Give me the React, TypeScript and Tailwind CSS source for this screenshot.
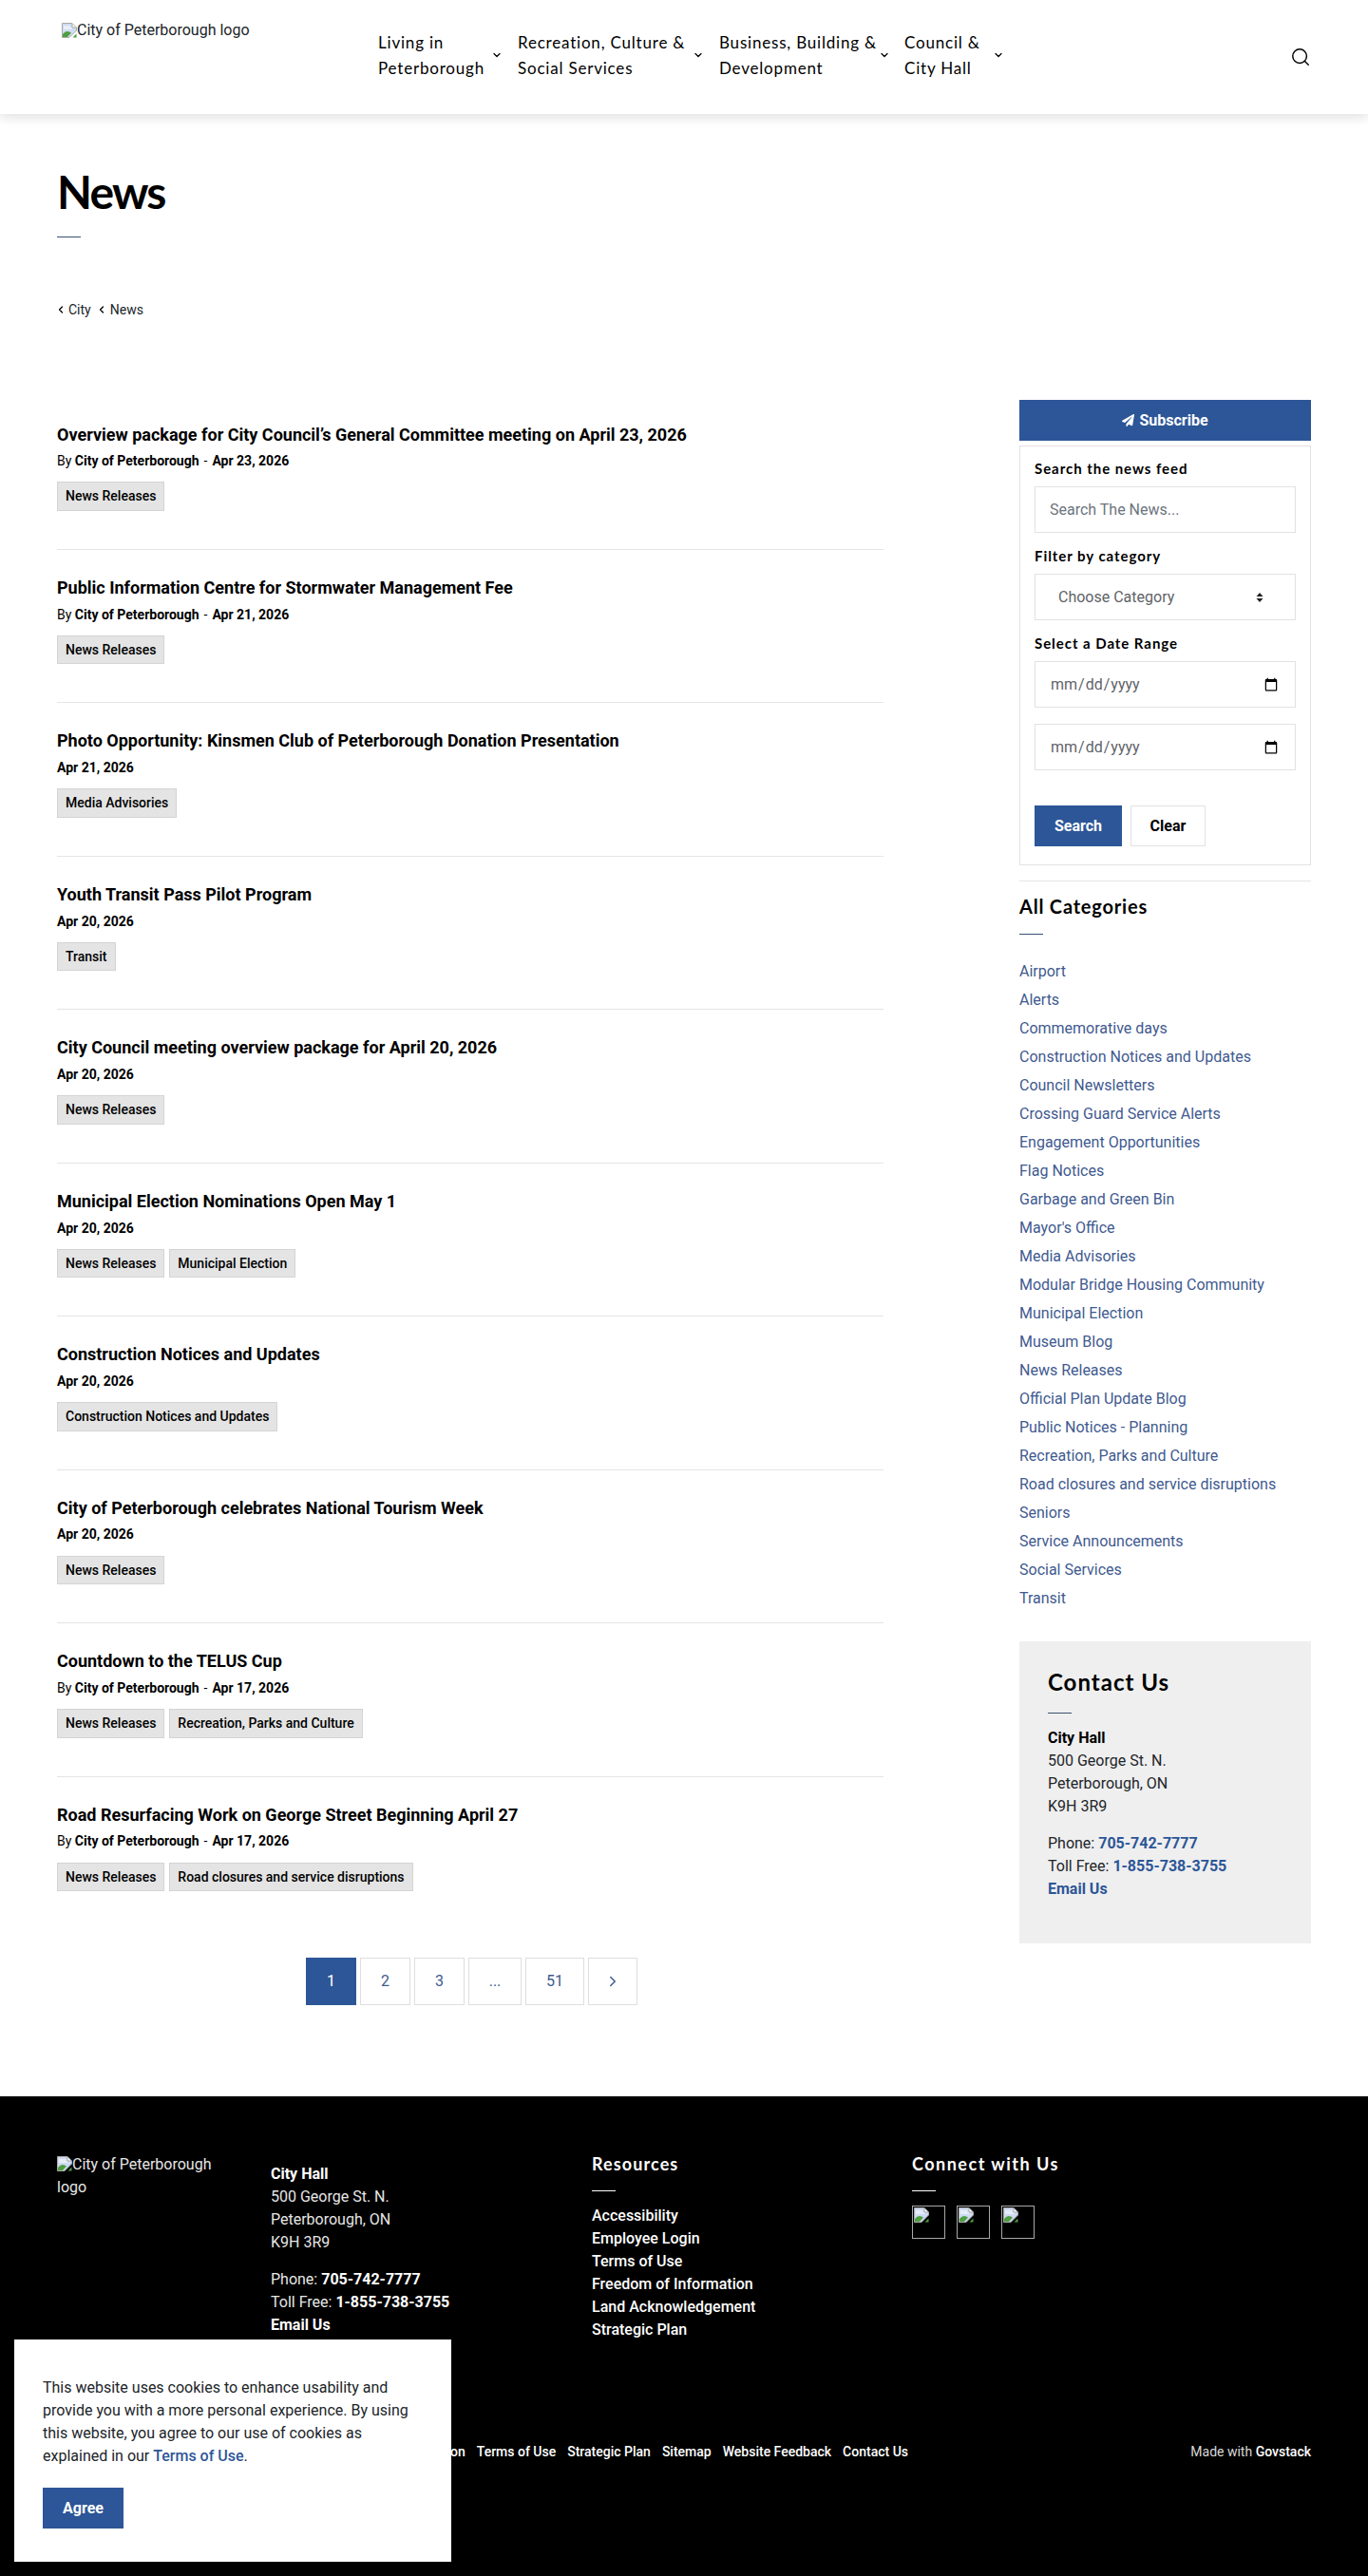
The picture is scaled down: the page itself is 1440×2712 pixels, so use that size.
import React from "react";
import { ChevronDown, ChevronLeft, ChevronRight, Search } from "lucide-react";
import { FaPaperPlane } from "react-icons/fa";

function BrokenImage() {
  return (
    <svg width="16" height="16" viewBox="0 0 16 16" className="inline-block shrink-0 align-[-2px]">
      <path d="M0.500 0.500H11L15.500 5V8L8 15.500H0.500z" fill="#cfdcf3" stroke="#a9a9a9" strokeWidth="1" />
      <path d="M2 4h7M2 6h9" stroke="#ffffff" strokeWidth="1" />
      <path d="M1 15V12Q4 8 8 9.500L10 10.500L6 15z" fill="#4f9e3f" />
      <path d="M11 1V5H15" fill="#ffffff" stroke="#a9a9a9" />
      <path d="M11.500 15.500H15.500V11.500z" fill="#4f9e3f" />
    </svg>
  );
}

const news = [
  { t: "Overview package for City Council’s General Committee meeting on April 23, 2026", by: true, d: "Apr 23, 2026", tags: ["News Releases"] },
  { t: "Public Information Centre for Stormwater Management Fee", by: true, d: "Apr 21, 2026", tags: ["News Releases"] },
  { t: "Photo Opportunity: Kinsmen Club of Peterborough Donation Presentation", by: false, d: "Apr 21, 2026", tags: ["Media Advisories"] },
  { t: "Youth Transit Pass Pilot Program", by: false, d: "Apr 20, 2026", tags: ["Transit"] },
  { t: "City Council meeting overview package for April 20, 2026", by: false, d: "Apr 20, 2026", tags: ["News Releases"] },
  { t: "Municipal Election Nominations Open May 1", by: false, d: "Apr 20, 2026", tags: ["News Releases", "Municipal Election"] },
  { t: "Construction Notices and Updates", by: false, d: "Apr 20, 2026", tags: ["Construction Notices and Updates"] },
  { t: "City of Peterborough celebrates National Tourism Week", by: false, d: "Apr 20, 2026", tags: ["News Releases"] },
  { t: "Countdown to the TELUS Cup", by: true, d: "Apr 17, 2026", tags: ["News Releases", "Recreation, Parks and Culture"] },
  { t: "Road Resurfacing Work on George Street Beginning April 27", by: true, d: "Apr 17, 2026", tags: ["News Releases", "Road closures and service disruptions"] },
];

const categories = [
  "Airport", "Alerts", "Commemorative days", "Construction Notices and Updates", "Council Newsletters",
  "Crossing Guard Service Alerts", "Engagement Opportunities", "Flag Notices", "Garbage and Green Bin",
  "Mayor's Office", "Media Advisories", "Modular Bridge Housing Community", "Municipal Election", "Museum Blog",
  "News Releases", "Official Plan Update Blog", "Public Notices - Planning", "Recreation, Parks and Culture",
  "Road closures and service disruptions", "Seniors", "Service Announcements", "Social Services", "Transit",
];

const nav = [
  { a: "Living in", b: "Peterborough", w: "w-[147px]", tw: "w-[119px]" },
  { a: "Recreation, Culture &", b: "Social Services", w: "w-[212px]", tw: "w-[184px]" },
  { a: "Business, Building &", b: "Development", w: "w-[195px]", tw: "w-[168px]" },
  { a: "Council &", b: "City Hall", w: "w-[110px]", tw: "w-[93px]" },
];

const pages = [
  { l: "1", w: "w-[53px]", active: true },
  { l: "2", w: "w-[53px]" },
  { l: "3", w: "w-[53px]" },
  { l: "...", w: "w-[56px]" },
  { l: "51", w: "w-[62px]" },
  { l: ">", w: "w-[52px]" },
];

const labelCls = "block h-6 mb-[7px] font-[Lato,sans-serif] font-bold text-[15px] leading-6 tracking-[0.95px] text-black";
const fieldCls = "block w-full h-[49px] border border-[#e2e2e2] bg-white px-[15px] text-[16px] text-[#5f6368] outline-none placeholder:text-[#6c757d]";

export default function App() {
  return (
    <div className="relative w-full bg-white font-[Roboto,sans-serif] text-[16px] text-black">
      <header className="relative z-10 flex h-[120px] items-start bg-white pl-[65px] pr-[60px] shadow-[0_5px_10px_rgba(0,0,0,0.1)]">
        <div className="mt-5 flex w-[333px] items-center gap-0 text-[16px] leading-6 text-[#212529]">
          <BrokenImage />
          <span>City of Peterborough logo</span>
        </div>
        <nav className="mt-[31px] flex">
          {nav.map((n) => (
            <div key={n.a} className={`flex items-center ${n.w}`}>
              <div className={`${n.tw} font-[Lato,sans-serif] text-[17px] leading-[27px] tracking-[0.8px] whitespace-nowrap text-black`}>
                {n.a}
                <br />
                {n.b}
              </div>
              <ChevronDown size={12} strokeWidth={2.5} className="text-black" />
            </div>
          ))}
        </nav>
        <div className="ml-auto mt-[49px]">
          <Search size={22} strokeWidth={1.6} className="text-black" />
        </div>
      </header>

      <section className="h-[300px] px-[60px] pt-[57px]">
        <h1 className="h-[50px] font-[Lato,sans-serif] text-[48px] leading-[50px] font-bold tracking-[-1.8px] text-black">News</h1>
        <div className="mt-[22px] h-px w-[25px] bg-[#3b5173]" />
        <div className="mt-[66px] flex items-center text-[14px] leading-5 text-[#212529]">
          <ChevronLeft size={12} strokeWidth={2.5} className="-ml-[2px] text-black" />
          <span className="ml-[2px]">City</span>
          <ChevronLeft size={12} strokeWidth={2.5} className="ml-[5px] text-black" />
          <span className="ml-[3px]">News</span>
        </div>
      </section>

      <main className="flex items-start justify-between px-[60px] pb-[96px]">
        <div className="w-[870px] pt-[26.500px]">
          {news.map((n, i) => (
            <article key={n.t} className={i < news.length - 1 ? "mb-[29px] border-b border-[#e5e5e5] pb-10" : ""}>
              <h2 className="text-[18px] leading-[21.6px] font-bold text-black">{n.t}</h2>
              <div className="mt-[7px] text-[14px] leading-[21px] font-bold text-black">
                {n.by && (
                  <>
                    <span className="font-normal">By </span>City of Peterborough<span className="mx-[5px] font-normal">-</span>
                  </>
                )}
                {n.d}
              </div>
              <div className="mt-[11.400px] flex gap-[5px]">
                {n.tags.map((t) => (
                  <span key={t} className="flex h-[30.500px] items-center border border-[#d4d4d4] bg-[#e4e4e4] px-2 text-[14px] font-medium text-black">
                    {t}
                  </span>
                ))}
              </div>
            </article>
          ))}
          <div className="mt-[70px] ml-[3px] flex h-[50px] justify-center gap-1">
            {pages.map((p) => (
              <span
                key={p.l}
                className={
                  p.active
                    ? `flex items-center justify-center ${p.w} bg-[#2c5697] text-[16px] text-white`
                    : `flex items-center justify-center ${p.w} border border-[#dedede] bg-white text-[16px] text-[#3f5a8f]`
                }
              >
                {p.l === ">" ? <ChevronRight size={18} strokeWidth={2} /> : p.l}
              </span>
            ))}
          </div>
        </div>

        <aside className="w-[307px] pt-[1px]">
          <button className="flex h-[43px] w-full items-center justify-center gap-[5px] bg-[#2c5697] text-[16px] font-bold text-white">
            <FaPaperPlane size={13} />
            Subscribe
          </button>
          <div className="mt-[5px] h-[442px] border border-[#e2e2e2] px-[15px] pt-[11px]">
            <label className={labelCls}>Search the news feed</label>
            <input className={fieldCls} placeholder="Search The News..." />
            <label className={`${labelCls} mt-3`}>Filter by category</label>
            <div className="relative">
              <select className="block h-[49px] w-full appearance-none border border-[#e2e2e2] bg-white pl-6 text-[16px] text-[#5f6368] outline-none">
                <option>Choose Category</option>
              </select>
              <svg width="8" height="12" viewBox="0 0 8 12" className="absolute top-[19px] right-[34px]">
                <path d="M4 1l3.500 4h-7zM4 11L.5 7h7z" fill="#222" />
              </svg>
            </div>
            <label className={`${labelCls} mt-3`}>Select a Date Range</label>
            <input type="date" className={fieldCls} />
            <input type="date" className={`${fieldCls} mt-[17px]`} />
            <div className="mt-[37px] flex gap-[9px]">
              <button className="h-[43px] w-[92px] bg-[#2c5697] text-[16px] font-bold text-white">Search</button>
              <button className="h-[43px] w-[79px] border border-[#e2e2e2] bg-white text-[16px] font-bold text-black">Clear</button>
            </div>
          </div>
          <div className="mt-4 h-px bg-[#e5e5e5]" />
          <h3 className="mt-[14px] h-6 font-[Lato,sans-serif] text-[20px] leading-6 font-bold tracking-[0.8px] text-black">All Categories</h3>
          <div className="mt-[17px] h-px w-[25px] bg-[#3b5173]" />
          <ul className="mt-[24px]">
            {categories.map((c) => (
              <li key={c} className="h-[30px] text-[16px] leading-[30px] text-[#3f5a8f]">
                {c}
              </li>
            ))}
          </ul>
          <div className="mt-[30px] h-[318px] bg-[#efefef] px-[30px] pt-[28px]">
            <h3 className="h-[30px] font-[Lato,sans-serif] text-[24px] leading-[30px] font-bold tracking-[1px] text-black">Contact Us</h3>
            <div className="mt-[17px] h-px w-[25px] bg-[#3b5173]" />
            <div className="mt-[14px] text-[16px] leading-6 text-[#212529]">
              <div className="font-bold text-black">City Hall</div>
              <div>500 George St. N.</div>
              <div>Peterborough, ON</div>
              <div>K9H 3R9</div>
              <div className="mt-[15px]">
                Phone: <span className="font-bold text-[#2c5697]">705-742-7777</span>
              </div>
              <div>
                Toll Free: <span className="font-bold text-[#2c5697]">1-855-738-3755</span>
              </div>
              <div className="font-bold text-[#2c5697]">Email Us</div>
            </div>
          </div>
        </aside>
      </main>

      <footer className="h-[505px] bg-black px-[60px] pt-[59px] text-[16px] leading-6 text-[#e6e6e6]">
        <div className="flex h-[303px] items-start">
          <div className="w-[225px] pt-[1px]">
            <div className="w-[180px]">
              <BrokenImage />
              City of Peterborough logo
            </div>
          </div>
          <div className="w-[338px] pt-[11px]">
            <div className="font-bold text-white">City Hall</div>
            <div>500 George St. N.</div>
            <div>Peterborough, ON</div>
            <div>K9H 3R9</div>
            <div className="mt-[15px]">
              Phone: <span className="font-bold text-white">705-742-7777</span>
            </div>
            <div>
              Toll Free: <span className="font-bold text-white">1-855-738-3755</span>
            </div>
            <div className="font-bold text-white">Email Us</div>
          </div>
          <div className="w-[337px]">
            <h3 className="h-6 font-[Lato,sans-serif] text-[18px] leading-6 font-bold tracking-[1.1px] text-white">Resources</h3>
            <div className="mt-4 h-px w-[25px] bg-white" />
            <ul className="mt-[14px] font-medium text-white">
              <li>Accessibility</li>
              <li>Employee Login</li>
              <li>Terms of Use</li>
              <li>Freedom of Information</li>
              <li>Land Acknowledgement</li>
              <li>Strategic Plan</li>
            </ul>
          </div>
          <div>
            <h3 className="h-6 font-[Lato,sans-serif] text-[18px] leading-6 font-bold tracking-[1.500px] text-white">Connect with Us</h3>
            <div className="mt-4 h-px w-[25px] bg-white" />
            <div className="mt-[15px] flex gap-3">
              {[0, 1, 2].map((i) => (
                <div key={i} className="h-[35px] w-[35px] border border-[#a8a8a8] p-[1px] leading-none">
                  <BrokenImage />
                </div>
              ))}
            </div>
          </div>
        </div>
        <div className="flex items-center justify-between text-[14px] leading-6">
          <div className="flex w-[896px] justify-end gap-3 font-medium text-white">
            <span>Freedom of Information</span>
            <span>Terms of Use</span>
            <span>Strategic Plan</span>
            <span>Sitemap</span>
            <span>Website Feedback</span>
            <span>Contact Us</span>
          </div>
          <div className="text-[#d8d8d8]">
            Made with <span className="font-medium text-white">Govstack</span>
          </div>
        </div>
      </footer>

      <div className="absolute bottom-[15px] left-[15px] z-20 h-[234px] w-[460px] bg-white px-[30px] pt-[39px] text-[16px] leading-6 text-[#212529]">
        <p>
          This website uses cookies to enhance usability and provide you with a more personal experience. By using this website, you agree to our use of cookies as explained in our{" "}
          <span className="font-medium text-[#2c5697]">Terms of Use</span>.
        </p>
        <button className="mt-[21px] h-[43px] w-[85px] bg-[#2c5697] text-[16px] font-bold text-white">Agree</button>
      </div>
    </div>
  );
}
